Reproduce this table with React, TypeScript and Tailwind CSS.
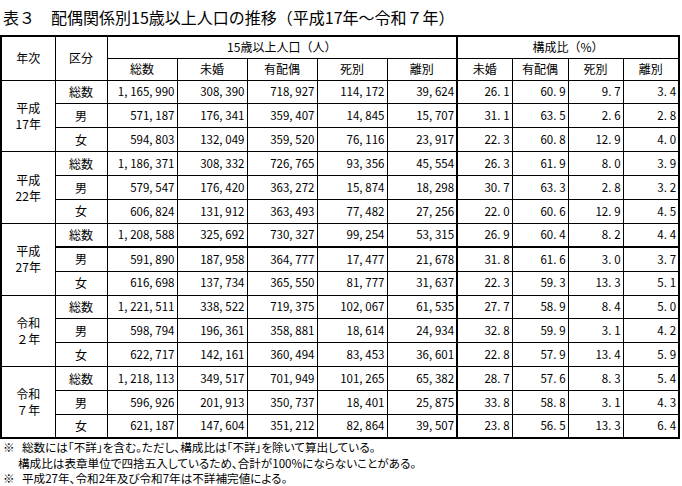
import React from "react";

type Row = { label: string; nums: string[]; pcts: string[] };
type Group = { year: [string, string]; rows: Row[] };

const groups: Group[] = [
  {
    year: ["平成", "17年"],
    rows: [
      { label: "総数", nums: ["1,165,990", "308,390", "718,927", "114,172", "39,624"], pcts: ["26.1", "60.9", "9.7", "3.4"] },
      { label: "男", nums: ["571,187", "176,341", "359,407", "14,845", "15,707"], pcts: ["31.1", "63.5", "2.6", "2.8"] },
      { label: "女", nums: ["594,803", "132,049", "359,520", "76,116", "23,917"], pcts: ["22.3", "60.8", "12.9", "4.0"] },
    ],
  },
  {
    year: ["平成", "22年"],
    rows: [
      { label: "総数", nums: ["1,186,371", "308,332", "726,765", "93,356", "45,554"], pcts: ["26.3", "61.9", "8.0", "3.9"] },
      { label: "男", nums: ["579,547", "176,420", "363,272", "15,874", "18,298"], pcts: ["30.7", "63.3", "2.8", "3.2"] },
      { label: "女", nums: ["606,824", "131,912", "363,493", "77,482", "27,256"], pcts: ["22.0", "60.6", "12.9", "4.5"] },
    ],
  },
  {
    year: ["平成", "27年"],
    rows: [
      { label: "総数", nums: ["1,208,588", "325,692", "730,327", "99,254", "53,315"], pcts: ["26.9", "60.4", "8.2", "4.4"] },
      { label: "男", nums: ["591,890", "187,958", "364,777", "17,477", "21,678"], pcts: ["31.8", "61.6", "3.0", "3.7"] },
      { label: "女", nums: ["616,698", "137,734", "365,550", "81,777", "31,637"], pcts: ["22.3", "59.3", "13.3", "5.1"] },
    ],
  },
  {
    year: ["令和", "２年"],
    rows: [
      { label: "総数", nums: ["1,221,511", "338,522", "719,375", "102,067", "61,535"], pcts: ["27.7", "58.9", "8.4", "5.0"] },
      { label: "男", nums: ["598,794", "196,361", "358,881", "18,614", "24,934"], pcts: ["32.8", "59.9", "3.1", "4.2"] },
      { label: "女", nums: ["622,717", "142,161", "360,494", "83,453", "36,601"], pcts: ["22.8", "57.9", "13.4", "5.9"] },
    ],
  },
  {
    year: ["令和", "７年"],
    rows: [
      { label: "総数", nums: ["1,218,113", "349,517", "701,949", "101,265", "65,382"], pcts: ["28.7", "57.6", "8.3", "5.4"] },
      { label: "男", nums: ["596,926", "201,913", "350,737", "18,401", "25,875"], pcts: ["33.8", "58.8", "3.1", "4.3"] },
      { label: "女", nums: ["621,187", "147,604", "351,212", "82,864", "39,507"], pcts: ["23.8", "56.5", "13.3", "6.4"] },
    ],
  },
];

const colWidths = ["w-[54px]", "w-[52px]", "w-[70px]", "w-[70px]", "w-[70px]", "w-[70px]", "w-[70px]", "w-[55px]", "w-[56px]", "w-[55px]", "w-[56px]"];

const num = "border border-black text-right pr-[2px] text-[11.5px] tabular-nums";

// the sheet's gothic font gives commas and points a full half-width cell
function Fig({ value }: { value: string }) {
  return (
    <>
      {value.split(/([,.])/).map((part, i) =>
        part === "," || part === "." ? (
          <span key={i} className="inline-block w-[6px] text-left">
            {part}
          </span>
        ) : (
          <React.Fragment key={i}>{part}</React.Fragment>
        )
      )}
    </>
  );
}

export default function App() {
  return (
    <div className="w-[682px] h-[486px] overflow-hidden bg-white text-black font-['Noto_Sans_CJK_JP',sans-serif]">
      {/* Title */}
      <div className="h-[35px] flex items-center pl-[3px] pb-[1px] text-[16px] leading-none">
        表３　配偶関係別15歳以上人口の推移（平成17年～令和７年）
      </div>

      {/* Table */}
      <table className="w-[680px] table-fixed border-collapse border-2 border-black text-[12px] leading-none">
        <colgroup>
          {colWidths.map((w, i) => (
            <col key={i} className={w} />
          ))}
        </colgroup>
        <thead>
          <tr className="h-[22px]">
            <th rowSpan={2} className="border border-black font-normal text-center">年次</th>
            <th rowSpan={2} className="border border-black font-normal text-center">区分</th>
            <th colSpan={5} className="border border-black border-r-2 font-normal text-center">15歳以上人口（人）</th>
            <th colSpan={4} className="border border-black font-normal text-center">構成比（%）</th>
          </tr>
          <tr className="h-[22px]">
            <th className="border border-black font-normal">総数</th>
            <th className="border border-black font-normal">未婚</th>
            <th className="border border-black font-normal">有配偶</th>
            <th className="border border-black font-normal">死別</th>
            <th className="border border-black border-r-2 font-normal">離別</th>
            <th className="border border-black font-normal">未婚</th>
            <th className="border border-black font-normal">有配偶</th>
            <th className="border border-black font-normal">死別</th>
            <th className="border border-black font-normal">離別</th>
          </tr>
        </thead>
        <tbody>
          {groups.map((g, gi) =>
            g.rows.map((r, ri) => {
              // the source sheet has a heavier rule under 平成27年 総数
              const heavy = gi === 2 && ri === 0 ? " border-b-2" : "";
              return (
                <tr key={`${gi}-${ri}`} className="h-[23.9px]">
                  {ri === 0 && (
                    <td rowSpan={3} className="border border-black text-center leading-[16px]">
                      {g.year[0]}
                      <br />
                      {g.year[1]}
                    </td>
                  )}
                  <td className={"border border-black text-center" + heavy}>{r.label}</td>
                  {r.nums.map((n, i) => (
                    <td key={i} className={num + (i === 4 ? " border-r-2" : "") + heavy}>
                      <Fig value={n} />
                    </td>
                  ))}
                  {r.pcts.map((p, i) => (
                    <td key={i} className={num + heavy}>
                      <Fig value={p} />
                    </td>
                  ))}
                </tr>
              );
            })
          )}
        </tbody>
      </table>

      {/* Notes */}
      <div className="text-[11.6px] leading-[15.5px] pt-[1px] [font-feature-settings:'palt']">
        <div className="flex">
          <span className="w-[22px] pl-[3px]">※</span>
          <span>総数には「不詳」を含む。ただし、構成比は「不詳」を除いて算出している。</span>
        </div>
        <div className="pl-[18px]">構成比は表章単位で四捨五入しているため、合計が100%にならないことがある。</div>
        <div className="flex">
          <span className="w-[22px] pl-[3px]">※</span>
          <span>平成27年、令和2年及び令和7年は不詳補完値による。</span>
        </div>
      </div>
    </div>
  );
}
